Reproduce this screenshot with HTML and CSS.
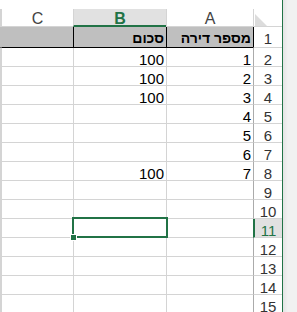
FILE: index.html
```html
<!DOCTYPE html>
<html lang="he">
<head>
<meta charset="utf-8">
<link rel="stylesheet" href="styles.css">
</head>
<body>
<div class="window">
  <div class="sheet">
    <div class="grid">
      <div class="hd corner"><svg class="tri" width="12" height="12" viewBox="0 0 12 12"><polygon points="0,0 0,12 12,12" fill="#dcdcdc"/></svg></div>
      <div class="hd">A</div>
      <div class="hd hd-sel">B</div>
      <div class="hd">C</div>
      <div class="hd edge-col"></div>

      <div class="rh rh-first">1</div>
      <div class="c r1 r1-b bold">מספר דירה</div>
      <div class="c r1 r1-b bold">סכום</div>
      <div class="c r1 r1-c"></div>
      <div class="c r1 r1-c edge-col"></div>

      <div class="rh">2</div><div class="c">1</div><div class="c">100</div><div class="c"></div><div class="c edge-col"></div>
      <div class="rh">3</div><div class="c">2</div><div class="c">100</div><div class="c"></div><div class="c edge-col"></div>
      <div class="rh">4</div><div class="c">3</div><div class="c">100</div><div class="c"></div><div class="c edge-col"></div>
      <div class="rh">5</div><div class="c">4</div><div class="c"></div><div class="c"></div><div class="c edge-col"></div>
      <div class="rh">6</div><div class="c">5</div><div class="c"></div><div class="c"></div><div class="c edge-col"></div>
      <div class="rh">7</div><div class="c">6</div><div class="c"></div><div class="c"></div><div class="c edge-col"></div>
      <div class="rh">8</div><div class="c">7</div><div class="c">100</div><div class="c"></div><div class="c edge-col"></div>
      <div class="rh">9</div><div class="c"></div><div class="c"></div><div class="c"></div><div class="c edge-col"></div>
      <div class="rh">10</div><div class="c"></div><div class="c"></div><div class="c"></div><div class="c edge-col"></div>
      <div class="rh rh-sel">11</div><div class="c"></div><div class="c active"><div class="sel"><div class="handle"></div></div></div><div class="c"></div><div class="c edge-col"></div>
      <div class="rh">12</div><div class="c"></div><div class="c"></div><div class="c"></div><div class="c edge-col"></div>
      <div class="rh">13</div><div class="c"></div><div class="c"></div><div class="c"></div><div class="c edge-col"></div>
      <div class="rh">14</div><div class="c"></div><div class="c"></div><div class="c"></div><div class="c edge-col"></div>
      <div class="rh">15</div><div class="c"></div><div class="c"></div><div class="c"></div><div class="c edge-col"></div>
    </div>
  </div>
  <div class="scroll"></div>
</div>
</body>
</html>
```

FILE: styles.css
```css
html, body {
  margin: 0;
  padding: 0;
  background: #ffffff;
}

body {
  font-family: "Liberation Sans", Arial, sans-serif;
  font-size: 15px;
  color: #000;
}

.window {
  display: flex;
  width: 297px;
  height: 312px;
  overflow: hidden;
}

.sheet {
  width: 282px;
  flex: none;
  padding-top: 9px;
  overflow: hidden;
}

.grid {
  direction: rtl;
  display: grid;
  grid-template-columns: 29px 87px 93px 72px 1px;
  grid-template-rows: 18px 21px repeat(14, 19px);
}

.grid > div {
  box-sizing: border-box;
  border-left: 1px solid #d4d4d4;
  border-bottom: 1px solid #d4d4d4;
  overflow: visible;
  white-space: nowrap;
}

.hd {
  display: flex;
  align-items: flex-end;
  justify-content: center;
  line-height: 13px;
  padding-bottom: 1px;
  color: #444;
  font-size: 16px;
}

.hd-sel {
  background: #e1e1e1;
  color: #217346;
  font-weight: bold;
  border-bottom: 2px solid #217346 !important;
  padding-bottom: 0;
}

.corner {
  justify-content: flex-end;
  padding-left: 1px;
  padding-bottom: 0;
}

.tri {
  display: block;
}

.rh {
  display: flex;
  align-items: flex-end;
  justify-content: center;
  line-height: 13px;
  color: #333;
  border-left-color: #ababab !important;
}

.rh-first {
  padding-bottom: 2px;
  border-left-color: #000 !important;
}

.rh-sel {
  background: #e1e1e1;
  color: #217346;
  border-left: 2px solid #217346 !important;
}

.c {
  display: flex;
  align-items: flex-end;
  justify-content: flex-start;
  line-height: 13px;
  padding-right: 2px;
}

.r1 {
  background: #bfbfbf;
  border-bottom-color: #000 !important;
  padding-bottom: 2px;
}

.r1-b {
  border-left-color: #000 !important;
}

.r1-c {
  border-left-color: #bfbfbf !important;
}

.bold {
  font-weight: bold;
  font-size: 14px;
}

.edge-col {
  padding: 0;
}

.active {
  position: relative;
}

.sel {
  position: absolute;
  left: -2px;
  right: -2px;
  top: -2px;
  bottom: -1px;
  border: 2px solid #217346;
  z-index: 2;
}

.handle {
  position: absolute;
  left: -4px;
  bottom: -5px;
  width: 5px;
  height: 5px;
  background: #217346;
  border: 1px solid #fff;
}

.scroll {
  flex: 1;
  border-left: 1px solid #217346;
  background: linear-gradient(to right, #e4e4e4 0px, #f1f1f1 5px, #f1f1f1 100%);
}
```
